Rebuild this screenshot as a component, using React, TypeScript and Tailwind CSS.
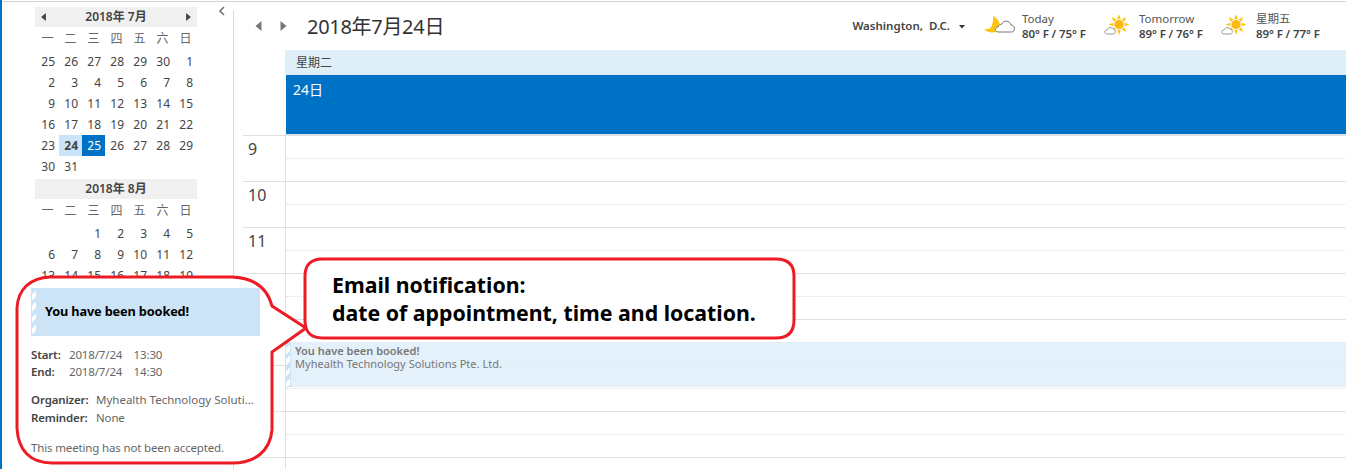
import React from 'react';

const julyRows = [
  ['25', '26', '27', '28', '29', '30', '1'],
  ['2', '3', '4', '5', '6', '7', '8'],
  ['9', '10', '11', '12', '13', '14', '15'],
  ['16', '17', '18', '19', '20', '21', '22'],
  ['23', '24', '25', '26', '27', '28', '29'],
  ['30', '31', '', '', '', '', ''],
];

const augRows = [
  ['', '', '1', '2', '3', '4', '5'],
  ['6', '7', '8', '9', '10', '11', '12'],
  ['13', '14', '15', '16', '17', '18', '19'],
];

const weekdays = ['一', '二', '三', '四', '五', '六', '日'];
const hours = ['9', '10', '11', '', '', '', '', ''];

const font = "font-['Noto_Sans','Noto_Sans_CJK_SC',sans-serif]";

const Tri = ({ dir, className, w = 7, h = 10 }: { dir: 'l' | 'r'; className: string; w?: number; h?: number }) => (
  <svg width={w} height={h} viewBox="0 0 6 10" className={className}>
    <path d={dir === 'l' ? 'M6 0V10L0 5Z' : 'M0 0V10L6 5Z'} fill="currentColor" />
  </svg>
);

const MonthGrid = ({ rows, month }: { rows: string[][]; month: 'jul' | 'aug' }) => (
  <div>
    <div className="h-[20px] mb-[1px] flex items-center justify-center text-[12px] leading-none font-semibold text-[#444] bg-[#f0f0f0] relative">
      {month === 'jul' && <Tri dir="l" w={5} h={8} className="absolute left-[6px] top-[6px] text-[#444]" />}
      {month === 'jul' ? '2018年 7月' : '2018年 8月'}
      {month === 'jul' && <Tri dir="r" w={5} h={8} className="absolute right-[6px] top-[6px] text-[#444]" />}
    </div>
    <div className="grid ml-[1px] grid-cols-[repeat(7,23px)] h-[22px] items-center text-[12px] leading-none text-[#666]">
      {weekdays.map((d) => (
        <div key={d} className="text-center">{d}</div>
      ))}
    </div>
    <div className="grid ml-[1px] grid-cols-[repeat(7,23px)] auto-rows-[21px] text-[12px] text-[#444] mt-[1px]">
      {rows.flat().map((d, i) => {
        const isToday = month === 'jul' && i === 29;
        const isSelected = month === 'jul' && i === 30;
        return (
          <div
            key={i}
            className={`flex items-center justify-end pr-[4px] ${isToday ? 'bg-[#cce4f7] font-bold' : ''} ${isSelected ? 'bg-[#0072c6] text-white' : ''}`}
          >
            {d}
          </div>
        );
      })}
    </div>
  </div>
);

const MoonCloud = () => (
  <svg width="32" height="20" viewBox="0 0 32 20" className="shrink-0 -mt-[3px]">
    <path d="M9 1C13 3 16 7 16 11C16 15 12 18 7 17.5C4 17 1.5 16 0 14C4 15 7 13.5 8 10C9 7 9.5 4 9 1Z" fill="#fdc60d" />
    <path d="M14 17C10.5 17 10.5 12 14 12C14.5 10 16 9.5 17.5 9.5C19 5 26 5 27 10C31 9.5 32 17 27.5 17Z" fill="#fff" stroke="#777" strokeWidth="1" />
  </svg>
);

const SunCloud = () => (
  <svg width="25" height="20" viewBox="0 0 25 20" className="shrink-0 -mt-[3px]">
    <path
      d="M15 -1L16.8 4H13.2ZM15 20L16.8 15H13.2ZM4.5 9.5L9.5 7.7V11.3ZM25.5 9.5L20.5 7.7V11.3ZM7.6 2.1L12.4 4.4L9.9 6.9ZM22.4 2.1L17.6 4.4L20.1 6.9ZM7.6 16.9L12.4 14.6L9.9 12.1ZM22.4 16.9L17.6 14.6L20.1 12.1Z"
      fill="#fdc60d"
    />
    <circle cx="15" cy="9.5" r="5" fill="#f9b90f" stroke="#fff" strokeWidth="0.7" />
    <path d="M3 19C0 19 0 15 3 15C4 12 8 12 9 14C12 14 12 19 9.5 19Z" fill="#fff" stroke="#999" strokeWidth="1" />
  </svg>
);

const Weather = ({ icon, label, temp, width, gap }: { icon: React.ReactNode; label: string; temp: string; width: string; gap: string }) => (
  <div className={`flex items-center ${width}`}>
    {icon}
    <div className={`${gap} text-[#444] text-[11.5px] leading-[15px]`}>
      <div className="text-[#555]">{label}</div>
      <div className="font-semibold tracking-[-0.1px] whitespace-nowrap">{temp}</div>
    </div>
  </div>
);

const Hatch = ({ className }: { className: string }) => (
  <div
    className={`w-[6px] border border-[#cde4f7] bg-[repeating-linear-gradient(135deg,#cde4f7_0px,#cde4f7_4px,#fff_4px,#fff_8px)] ${className}`}
  />
);

const Field = ({ label, value, labelWidth, valueClass = '' }: { label: string; value: string; labelWidth: string; valueClass?: string }) => (
  <div className="flex h-[17px] items-center">
    <span className={`font-semibold text-[#444] ${labelWidth}`}>{label}</span>
    <span className={`text-[#666] whitespace-pre ${valueClass}`}>{value}</span>
  </div>
);

export default function App() {
  return (
    <div className={`relative h-[469px] w-[1346px] overflow-hidden bg-white border-l-2 border-[#0072c6] pt-[1px] ${font}`}>
      <div className="flex h-full border-t border-[#d4d4d4]">
        {/* Date navigator */}
        <aside className="w-[231px] shrink-0 flex h-full">
          <div className="w-[162px] ml-[33px] pt-[5px] flex flex-col gap-[2px] shrink-0">
            <MonthGrid rows={julyRows} month="jul" />
            <MonthGrid rows={augRows} month="aug" />
          </div>
          <svg width="6" height="10" viewBox="0 0 6 10" className="ml-[22px] mt-[4px] text-[#777]">
            <path d="M5 1L1 5L5 9" fill="none" stroke="currentColor" strokeWidth="1.6" />
          </svg>
        </aside>

        {/* Main day view */}
        <main className="flex-1 min-w-0 flex flex-col relative">
          <div className="absolute left-0 top-[8px] bottom-0 w-px bg-[#d9d9d9]" />
          <header className="h-[48px] flex items-center shrink-0">
            <Tri dir="l" className="ml-[22px] text-[#777]" />
            <Tri dir="r" className="ml-[18px] text-[#777]" />
            <h1 className="ml-[20px] mt-[2px] text-[20px] leading-none font-normal tracking-[-0.3px] text-[#333]">2018年7月24日</h1>
            <div className="ml-auto flex items-center">
              <span className="text-[11.5px] font-semibold text-[#444] whitespace-pre">Washington,  D.C.</span>
              <svg width="6" height="4" viewBox="0 0 6 4" className="ml-[9px] mr-[19px] mt-[1px]">
                <path d="M0 0H6L3 3.5Z" fill="#333" />
              </svg>
              <Weather icon={<MoonCloud />} label="Today" temp="80° F / 75° F" width="w-[120px]" gap="ml-[6px]" />
              <Weather icon={<SunCloud />} label="Tomorrow" temp="89° F / 76° F" width="w-[117px]" gap="ml-[10px]" />
              <Weather icon={<SunCloud />} label="星期五" temp="89° F / 77° F" width="w-[125px]" gap="ml-[10px]" />
            </div>
          </header>

          <div className="ml-[52px] h-[25px] shrink-0 bg-[#dfeff9] pl-[11px] flex items-center text-[12px] text-[#444]">星期二</div>
          <div className="ml-[53px] h-[59px] shrink-0 bg-[#0072c6] pl-[7px] pt-[4px] text-[14px] leading-[22px] text-white">24日</div>
          <div className="ml-[52px] h-[1px] shrink-0 bg-[#e1e1e1]" />

          <div className="ml-[10px] relative">
            {hours.map((h, i) => (
              <div key={i} className="flex h-[46px] border-t border-[#e1e1e1]">
                <div className="w-[42px] shrink-0 pl-[5px] pt-[2px] text-[16px] leading-[22px] text-[#444]">{h}</div>
                <div className="flex-1 border-l border-[#e1e1e1]">
                  <div className="h-[23px] border-b border-dotted border-[#e0e0e0]" />
                </div>
              </div>
            ))}
            {/* Appointment block */}
            <div className="absolute left-[42px] right-0 top-[207px] h-[45px] bg-[#e1eff9]/90 flex">
              <Hatch className="h-full shrink-0" />
              <div className="pl-[4px] pt-[2px] text-[11px] leading-[13px] text-[#777]">
                <div className="font-semibold">You have been booked!</div>
                <div className="tracking-[0.03px]">Myhealth Technology Solutions Pte. Ltd.</div>
              </div>
            </div>
          </div>
        </main>
      </div>

      {/* Red callouts drawn over the calendar */}
      <svg width="1346" height="469" viewBox="0 0 1346 469" className="absolute -left-[2px] top-0 pointer-events-none">
        <path
          d="M50 277H232C256 278 268 290 272 306L306 328L272 352V430C270 452 254 463 232 463H52C30 463 18 450 17 428V308C18 289 30 278 50 277Z"
          fill="#fff"
          stroke="#ed1c24"
          strokeWidth="3"
        />
        <path
          d="M322 259H776C788 259 794 265 794 276V320C794 332 788 338 776 338H322C312 338 306 334 305 322V276C305 265 311 259 322 259Z"
          fill="#fff"
          stroke="#ed1c24"
          strokeWidth="3"
        />
      </svg>

      <div className="absolute left-[330px] top-[271px] text-[21.3px] leading-[28px] font-bold text-black whitespace-nowrap">
        <div>Email notification:</div>
        <div>date of appointment, time and location.</div>
      </div>

      <div className="absolute left-[29px] top-[288px] w-[229px] text-[11.5px] tracking-[-0.15px] leading-[17px]">
        <div className="h-[48px] flex bg-[#cde4f7]">
          <Hatch className="h-full shrink-0" />
          <div className="pl-[8px] pb-[2px] flex items-center text-[12.75px] font-bold text-black">You have been booked!</div>
        </div>
        <div className="mt-[10px]">
          <Field label="Start:" value="2018/7/24    13:30" labelWidth="w-[38px]" />
          <Field label="End:" value="2018/7/24    14:30" labelWidth="w-[38px]" />
        </div>
        <div className="mt-[11px]">
          <Field label="Organizer:" value="Myhealth Technology Soluti..." labelWidth="w-[65px]" valueClass="tracking-normal" />
          <div className="mt-[1px]">
            <Field label="Reminder:" value="None" labelWidth="w-[65px]" />
          </div>
        </div>
        <div className="mt-[13px] text-[#666]">This meeting has not been accepted.</div>
      </div>
    </div>
  );
}
